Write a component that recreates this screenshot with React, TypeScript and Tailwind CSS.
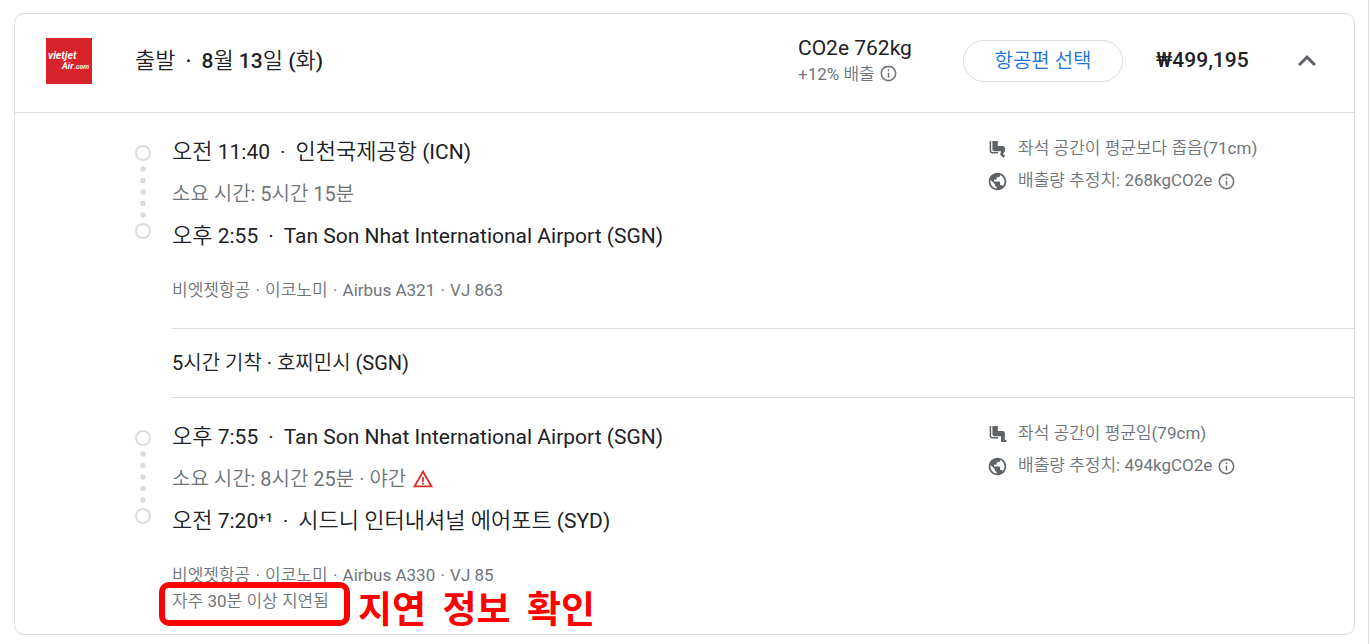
import React from "react";
import { MdExpandLess, MdInfoOutline, MdPublic, MdWarningAmber } from "react-icons/md";

type Seat = "tight" | "average";

function Logo() {
  return (
    <svg viewBox="0 0 46 46" className="size-[46px] shrink-0" role="img" aria-label="vietjet Air.com">
      <rect width="46" height="46" fill="#d8232a" />
      <g fill="#fff" fontFamily="Roboto, sans-serif" fontStyle="italic" fontWeight="700">
        <text x="2" y="21" fontSize="10.5">vietjet</text>
        <text x="16" y="31" fontSize="9">Air</text>
        <text x="28" y="31" fontSize="7">.com</text>
      </g>
    </svg>
  );
}

function SeatIcon({ kind }: { kind: Seat }) {
  return (
    <svg viewBox="0 0 20 20" className="size-5 shrink-0" fill="none" stroke="currentColor" aria-hidden="true">
      <path d="M2.4 2v9.8q0 2 2 2H10" strokeWidth="1.5" />
      <path d="M4.4 2H9.8v5h5q2 0 2 2v3.2H6.4q-2 0-2-2z" fill="currentColor" stroke="none" />
      {kind === "tight" ? (
        <path d="M11.2 9h5.6v3.4l-1.6 2.6.4.8 1.6.6-1.8 2.6-3.2-3.2.8-3.6z" fill="currentColor" stroke="none" />
      ) : (
        <path d="M13 9h3.8v7h1.7v2H13z" fill="currentColor" stroke="none" />
      )}
    </svg>
  );
}

function Timeline() {
  return (
    <svg viewBox="0 0 16 94" className="mt-[14px] h-[94px] w-4 shrink-0" aria-hidden="true">
      <g fill="none" stroke="#dadce0" strokeWidth="2">
        <circle cx="8" cy="8" r="7" />
        <circle cx="8" cy="86" r="7" />
      </g>
      <g fill="#dadce0">
        {[24, 35.5, 47, 58.5, 70].map((y) => (
          <circle key={y} cx="8" cy={y} r="2.7" />
        ))}
      </g>
    </svg>
  );
}

function InfoButton({ label }: { label: string }) {
  return (
    <button type="button" aria-label={label} className="shrink-0 text-[#70757a]">
      <MdInfoOutline className="size-[19px]" />
    </button>
  );
}

/** Sets Hangul runs one size above the Latin text around them. */
function Heading({ text }: { text: string }) {
  return text.split(/([가-힣]+)/).map((run, i) =>
    i % 2 ? (
      <span key={i} className="text-[22px]">
        {run}
      </span>
    ) : (
      run
    ),
  );
}

function Stop({ time, place, plus }: { time: string; place: string; plus?: string }) {
  return (
    <div className="h-[42px] text-[21px] leading-[42px] text-[#202124]">
      <Heading text={time} />
      {plus && <sup className="text-[13px] font-medium">{plus}</sup>}
      <span className="mx-[10px]">·</span>
      <Heading text={place} />
    </div>
  );
}

/** Joins the flight facts with evenly spaced middle dots. */
function Facts({ items }: { items: string[] }) {
  return (
    <p>
      {items.map((item, i) => (
        <React.Fragment key={item}>
          {i > 0 && (
            <>
              {" "}
              <span className="mx-px">·</span>{" "}
            </>
          )}
          {item}
        </React.Fragment>
      ))}
    </p>
  );
}

interface SegmentProps {
  from: { time: string; place: string };
  to: { time: string; place: string; plus?: string };
  duration: string;
  warning?: boolean;
  flight: string[];
  seat: Seat;
  legroom: string;
  emission: string;
  children?: React.ReactNode;
}

function Segment({ from, to, duration, warning, flight, seat, legroom, emission, children }: SegmentProps) {
  return (
    <section className="flex pt-[18px] pl-[120px]">
      <Timeline />
      <div className="ml-[21px] flex-1">
        <Stop {...from} />
        <div className="flex h-[42px] items-center gap-[6px] text-xl text-[#70757a]">
          {duration}
          {warning && <MdWarningAmber className="size-[22px] text-[#d93025]" aria-label="주의" />}
        </div>
        <Stop {...to} />
        <div className="mt-5 text-[17px] leading-[26px] text-[#70757a]">
          <Facts items={flight} />
          {children}
        </div>
      </div>
      <ul className="w-[367px] shrink-0 pt-[2px] text-[17px] text-[#70757a]">
        <li className="flex h-8 items-center gap-[10px]">
          <span className="flex w-[21px] justify-center text-[#5f6368]">
            <SeatIcon kind={seat} />
          </span>
          {legroom}
        </li>
        <li className="flex h-8 items-center gap-[10px]">
          <MdPublic className="size-[21px] shrink-0 text-[#5f6368]" />
          <span className="flex items-center gap-[5px]">
            {emission}
            <InfoButton label="배출량 정보" />
          </span>
        </li>
      </ul>
    </section>
  );
}

export default function App() {
  return (
    <main className="mr-px min-h-screen border-r border-[#dadce0] bg-white pt-[13px] pr-[13px] pb-[9px] pl-[14px] font-['Roboto','Noto_Sans_CJK_KR_DemiLight','Noto_Sans_CJK_KR_Light','Noto_Sans_CJK_KR',sans-serif]">
      <article className="rounded-[10px] border border-[#dadce0]">
        <header className="flex h-[99px] items-center border-b border-[#dadce0] pr-[29px] pb-[5px] pl-[31px]">
          <Logo />
          <h2 className="ml-[43px] flex-1 text-[21px] font-medium text-[#202124]">
            <Heading text="출발" />
            <span className="mx-[10px]">·</span>
            <Heading text="8월 13일 (화)" />
          </h2>
          <div className="w-[165px] shrink-0">
            <div className="text-[21px] leading-[26px] text-[#202124]">CO2e 762kg</div>
            <div className="flex items-center gap-1 text-[17px] leading-[26px] text-[#70757a]">
              +12% 배출
              <InfoButton label="CO2e 정보" />
            </div>
          </div>
          <button type="button" className="h-[42px] w-40 shrink-0 rounded-full border border-[#dadce0] text-xl text-[#1a73e8]">
            항공편 선택
          </button>
          <div className="ml-[33px] w-[133px] shrink-0 text-[21px] font-medium text-[#202124]">₩499,195</div>
          <button type="button" aria-label="접기" className="shrink-0 text-[#5f6368]">
            <MdExpandLess className="size-9" />
          </button>
        </header>

        <Segment
          from={{ time: "오전 11:40", place: "인천국제공항 (ICN)" }}
          to={{ time: "오후 2:55", place: "Tan Son Nhat International Airport (SGN)" }}
          duration="소요 시간: 5시간 15분"
          flight={["비엣젯항공", "이코노미", "Airbus A321", "VJ 863"]}
          seat="tight"
          legroom="좌석 공간이 평균보다 좁음(71cm)"
          emission="배출량 추정치: 268kgCO2e"
        />

        <div className="mt-[25px] ml-[157px] border-y border-[#dadce0] text-xl leading-[68px] text-[#202124]">
          5시간 기착 · 호찌민시 (SGN)
        </div>

        <Segment
          from={{ time: "오후 7:55", place: "Tan Son Nhat International Airport (SGN)" }}
          to={{ time: "오전 7:20", plus: "+1", place: "시드니 인터내셔널 에어포트 (SYD)" }}
          duration="소요 시간: 8시간 25분 · 야간"
          warning
          flight={["비엣젯항공", "이코노미", "Airbus A330", "VJ 85"]}
          seat="average"
          legroom="좌석 공간이 평균임(79cm)"
          emission="배출량 추정치: 494kgCO2e"
        >
          <div className="relative mb-5">
            <p>자주 30분 이상 지연됨</p>
            <span className="absolute -top-[6px] -left-[13px] h-11 w-[191px] rounded-[10px] border-[6px] border-[#ff0000]" />
            <strong className="absolute -top-1 left-[186px] font-['Noto_Sans_CJK_KR',sans-serif] text-[37px] leading-[46px] font-bold whitespace-nowrap text-[#ff0000]">
              지연 <span className="mx-2">정보</span> 확인
            </strong>
          </div>
        </Segment>
      </article>
    </main>
  );
}
